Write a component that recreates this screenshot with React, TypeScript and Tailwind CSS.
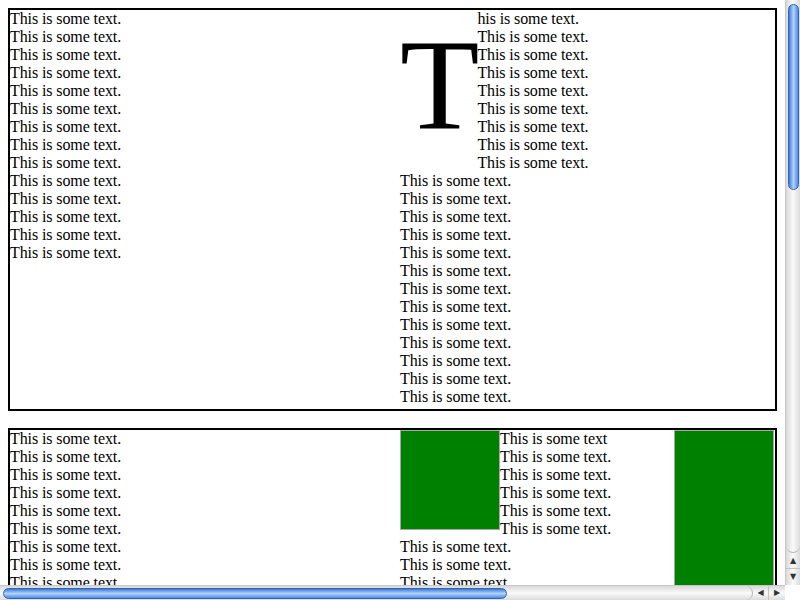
const LINE = "This is some text.";

function Lines({ count }: { count: number }) {
  return (
    <>
      {Array.from({ length: count }).map((_, i) => (
        <div key={i}>{LINE}</div>
      ))}
    </>
  );
}

function VerticalScrollbar() {
  return (
    <div className="flex flex-col bg-gradient-to-r from-[#d9d9d9] via-[#fafafa] to-[#dcdcdc] border-l border-[#c8c8c8]">
      <div className="h-[4px]" />
      <div className="mx-auto h-[186px] w-[11px] rounded-full border border-[#2f64bd] bg-gradient-to-r from-[#3d78d8] via-[#b3d3fa] to-[#4f8ae3]" />
      <div className="flex-1 rounded-b-full border-b border-[#b5b5b5]" />
      <div className="flex h-[16px] items-center justify-center border-b border-[#c4c4c4] text-[8px] leading-none text-[#333] font-['DejaVu_Sans',sans-serif]">
        ▲
      </div>
      <div className="flex h-[16px] items-center justify-center text-[8px] leading-none text-[#333] font-['DejaVu_Sans',sans-serif]">
        ▼
      </div>
    </div>
  );
}

function HorizontalScrollbar() {
  return (
    <div className="flex flex-row bg-gradient-to-b from-[#d9d9d9] via-[#fafafa] to-[#dcdcdc] border-t border-[#c8c8c8]">
      <div className="w-[3px]" />
      <div className="my-auto h-[11px] w-[504px] rounded-full border border-[#2f64bd] bg-gradient-to-b from-[#3d78d8] via-[#b3d3fa] to-[#4f8ae3]" />
      <div className="flex-1 rounded-r-full border-r border-[#b5b5b5]" />
      <div className="flex w-[16px] items-center justify-center border-r border-[#c4c4c4] text-[8px] leading-none text-[#333] font-['DejaVu_Sans',sans-serif]">
        ◀
      </div>
      <div className="flex w-[16px] items-center justify-center text-[8px] leading-none text-[#333] font-['DejaVu_Sans',sans-serif]">
        ▶
      </div>
    </div>
  );
}

export default function App() {
  return (
    <div className="grid h-[600px] w-[800px] grid-cols-[785px_15px] grid-rows-[585px_15px] overflow-hidden bg-white text-black">
      <div className="overflow-hidden p-2 font-['Liberation_Serif',serif] text-[16px] leading-[18px] tracking-[-0.1px]">
        {/* first box: plain text + drop cap */}
        <div className="grid h-[403px] w-[769px] grid-cols-[390px_375px] border-2 border-black">
          <div>
            <Lines count={14} />
          </div>
          <div>
            <span className="float-left mr-[-2px] text-[130px] leading-[149px] tracking-normal">T</span>
            <div>his is some text.</div>
            <Lines count={21} />
          </div>
        </div>

        {/* second box: floated green blocks */}
        <div className="mt-[17px] grid w-[769px] grid-cols-[390px_375px] border-2 border-black">
          <div>
            <Lines count={12} />
          </div>
          <div>
            <div className="float-right mr-px h-[300px] w-[100px] border border-[#a8a8a8] bg-[#008000]" />
            <div className="float-left h-[100px] w-[100px] border border-[#a8a8a8] bg-[#008000]" />
            <div>This is some text</div>
            <Lines count={10} />
          </div>
        </div>
      </div>
      <VerticalScrollbar />
      <HorizontalScrollbar />
      <div className="bg-white" />
    </div>
  );
}
